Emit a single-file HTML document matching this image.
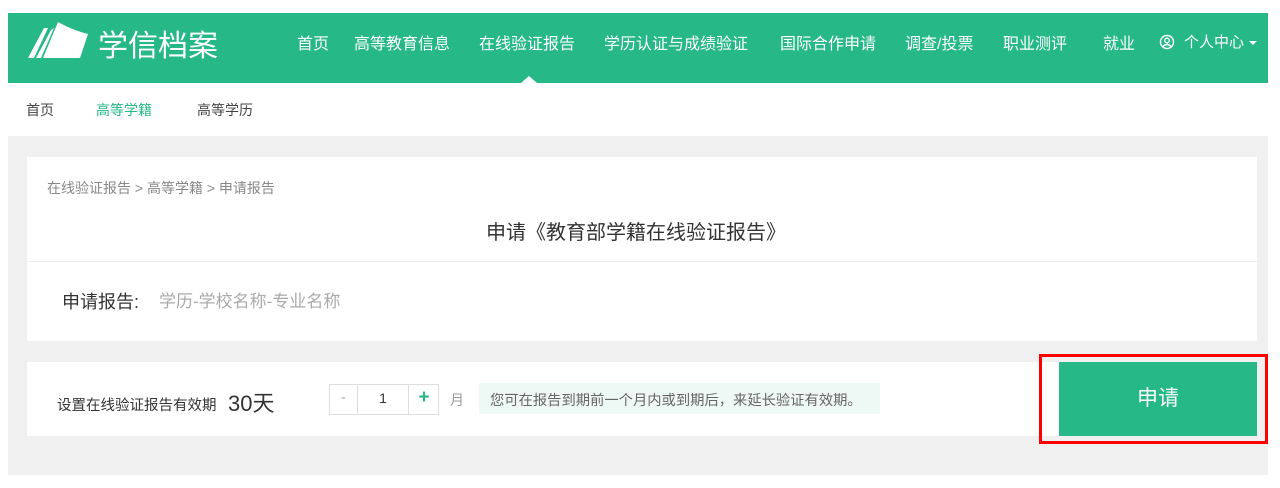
<!DOCTYPE html>
<html><head><meta charset="utf-8"><style>
*{margin:0;padding:0;box-sizing:border-box}
body{width:1280px;height:488px;background:#fff;position:relative;overflow:hidden;font-family:"Liberation Sans","Noto Sans CJK SC",sans-serif;color:#333}
.a{position:absolute;white-space:nowrap}
.hdr{left:8px;top:13px;width:1260px;height:70px;background:#26b886}
.nav{top:30px;font-size:16px;color:#fff}
.gray{left:8px;top:136px;width:1260px;height:339px;background:#f0f0f0}
.card{background:#fff}
</style></head><body>
<div class="a hdr"></div>
<svg class="a" style="left:26px;top:20px" width="66" height="40" viewBox="0 0 66 40">
<path d="M2 38 L18 8 L22 8 L8 38Z" fill="#fff"/>
<path d="M10 38 L25 10 L28 8 L15 38Z" fill="#fff"/>
<path d="M17 38 L32 2 Q46 10 62 14 L54 38Z" fill="#fff"/>
</svg>
<div class="a" style="left:98px;top:21px;font-size:30px;color:#fff">学信档案</div>
<div class="a nav" style="left:297px">首页</div>
<div class="a nav" style="left:354px">高等教育信息</div>
<div class="a nav" style="left:479px">在线验证报告</div>
<div class="a nav" style="left:604px">学历认证与成绩验证</div>
<div class="a nav" style="left:780px">国际合作申请</div>
<div class="a nav" style="left:905px">调查/投票</div>
<div class="a nav" style="left:1003px">职业测评</div>
<div class="a nav" style="left:1103px">就业</div>
<svg class="a" style="left:1159px;top:34px" width="16" height="16" viewBox="0 0 16 16"><circle cx="8" cy="8" r="6.5" stroke="#fff" stroke-width="1.4" fill="none"/><circle cx="8" cy="6.5" r="2.3" stroke="#fff" stroke-width="1.3" fill="none"/><path d="M4 12.5 Q8 8.5 12 12.5" stroke="#fff" stroke-width="1.3" fill="none"/></svg>
<div class="a" style="left:1184px;top:31px;font-size:15px;color:#fff">个人中心</div>
<div class="a" style="left:1249px;top:41px;border:4px solid transparent;border-top:4px solid #fff;border-bottom:0"></div>
<div class="a" style="left:521px;top:76px;border:8px solid transparent;border-bottom:7px solid #fff;border-top:0"></div>
<div class="a" style="left:26px;top:100px;font-size:14px;color:#444">首页</div>
<div class="a" style="left:96px;top:100px;font-size:14px;color:#26b886">高等学籍</div>
<div class="a" style="left:197px;top:100px;font-size:14px;color:#444">高等学历</div>
<div class="a gray"></div>
<div class="a card" style="left:27px;top:157px;width:1230px;height:184px"></div>
<div class="a" style="left:27px;top:261px;width:1230px;height:1px;background:#eee"></div>
<div class="a" style="left:47px;top:178px;font-size:14px;color:#888">在线验证报告 &gt; 高等学籍 &gt; 申请报告</div>
<div class="a" style="left:486px;top:216px;font-size:20px;color:#333">申请《教育部学籍在线验证报告》</div>
<div class="a" style="left:62px;top:288px;font-size:18px;color:#333">申请报告:</div>
<div class="a" style="left:159px;top:287px;font-size:17px;color:#aaa">学历-学校名称-专业名称</div>
<div class="a card" style="left:27px;top:362px;width:1230px;height:74px"></div>
<div class="a" style="left:57px;top:394px;font-size:14.5px;color:#333">设置在线验证报告有效期</div>
<div class="a" style="left:228px;top:386px;font-size:22px;color:#333">30天</div>
<div class="a" style="left:329px;top:384px;width:110px;height:31px;border:1px solid #ddd;background:#fff"></div>
<div class="a" style="left:357px;top:384px;width:1px;height:31px;background:#ddd"></div>
<div class="a" style="left:408px;top:384px;width:1px;height:31px;background:#ddd"></div>
<div class="a" style="left:330px;top:389px;font-size:15px;color:#aaa;width:27px;text-align:center">-</div>
<div class="a" style="left:358px;top:390px;font-size:14px;color:#333;width:50px;text-align:center">1</div>
<div class="a" style="left:409px;top:387px;font-size:19px;color:#26b886;width:30px;text-align:center;font-weight:bold">+</div>
<div class="a" style="left:450px;top:390px;font-size:14px;color:#999">月</div>
<div class="a" style="left:479px;top:383px;width:401px;height:31px;background:#eef8f4"></div>
<div class="a" style="left:490px;top:389px;font-size:14.3px;color:#666">您可在报告到期前一个月内或到期后，来延长验证有效期。</div>
<div class="a" style="left:1039px;top:354px;width:229px;height:90px;border:3px solid #f00"></div>
<div class="a" style="left:1059px;top:362px;width:198px;height:74px;background:#26b886;color:#fff;font-size:21px;text-align:center;line-height:74px">申请</div>
</body></html>
